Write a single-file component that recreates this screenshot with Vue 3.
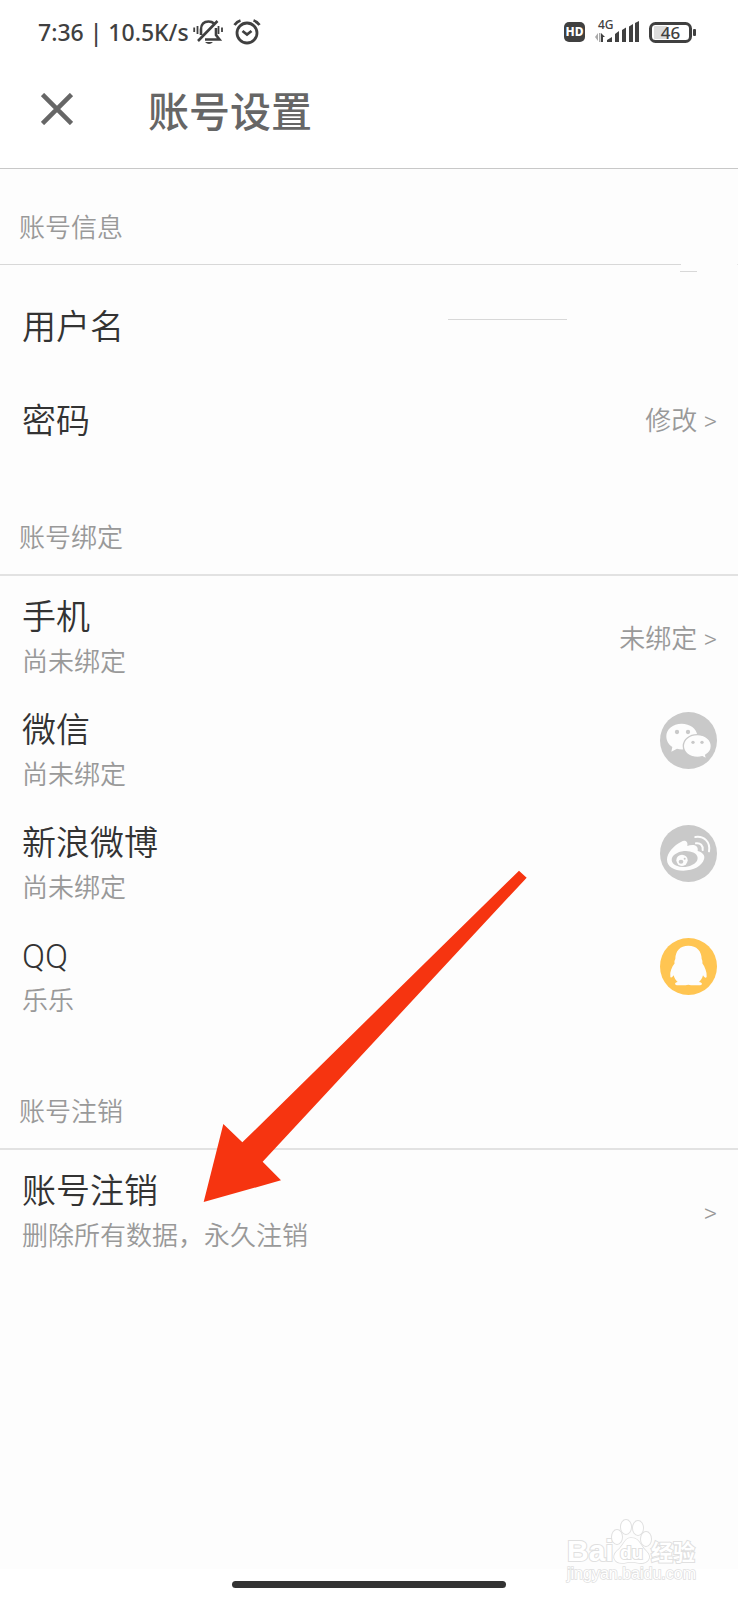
<script setup>
const bindings = [
  { id: 'phone', name: '手机', status: '尚未绑定', action: '未绑定' },
  { id: 'wechat', name: '微信', status: '尚未绑定' },
  { id: 'weibo', name: '新浪微博', status: '尚未绑定' },
  { id: 'qq', name: 'QQ', status: '乐乐' },
]
</script>

<template>
  <div class="page">
    <div class="status">
      <span class="status-text">7:36 | 10.5K/s</span>
      <svg class="bell" viewBox="0 0 30 28" width="30" height="28" fill="none" stroke="#404040" stroke-width="2.600">
        <path d="M8 17V11.500C8 6 11 3.500 15.500 3.500C18 3.500 19.500 4 21 5.500M23 10V17L26.500 21.500H12M5 23L24.500 3" />
        <path d="M1.200 9.500V14M4.500 8V16M25.500 8V16M29 9.500V14" stroke-width="1.800" />
        <path d="M12 24H20Q16 28 12 24Z" fill="#404040" stroke="none" />
      </svg>
      <svg class="alarm" viewBox="0 0 28 28" width="28" height="28" fill="none" stroke="#404040" stroke-width="2.800">
        <circle cx="14" cy="15" r="10" />
        <path d="M1.500 7Q4 3.500 7.500 2.500M20.500 2.500Q24 3.500 26.500 7" />
        <path d="M9.500 13L14 16.500L18.500 13" />
      </svg>
      <span class="spacer"></span>
      <span class="hd">HD</span>
      <svg class="signal" viewBox="0 0 46 32" width="46" height="32" fill="#404040">
        <text x="4" y="13" font-size="12">4G</text>
        <path d="M4 17V25L1 21Z" fill="#aaa" />
        <path d="M5 17H6.500V26H5Z" fill="#aaa" />
        <path d="M8 17L12 21H10V26H8ZM14 26V24L19 21V26ZM22 26V18L26 15V26ZM29 26V14L33 11.500V26ZM36 26V10.500L40 8V26ZM42 26V7L46 5V26Z" transform="translate(-1 0)" />
      </svg>
      <svg class="battery" viewBox="0 0 47 21" width="47" height="21">
        <rect x="1.500" y="1.500" width="40" height="18" rx="5" fill="#fff" stroke="#404040" stroke-width="3" />
        <path d="M6 4H18V17H6Q5 17 5 16V5Q5 4 6 4Z" fill="#ddd" />
        <rect x="44" y="7" width="3" height="7" rx="1" fill="#404040" />
        <text x="21.500" y="16.500" font-size="17" font-weight="500" text-anchor="middle" fill="#404040">46</text>
      </svg>
    </div>

    <header class="bar">
      <button class="close" aria-label="关闭">
        <svg viewBox="0 0 32 32" width="32" height="32" stroke="#666" stroke-width="4.600">
          <path d="M1.500 1.500L30.500 30.500M30.500 1.500L1.500 30.500" />
        </svg>
      </button>
      <h1>账号设置</h1>
    </header>

    <main>
      <section class="group info">
        <h2>账号信息</h2>
        <div class="broken-rule"><i></i><b></b></div>
        <div class="rows">
          <div class="row short"><span class="name">用户名</span></div>
          <div class="row short">
            <span class="name">密码</span>
            <button class="link">修改 &gt;</button>
          </div>
        </div>
        <i class="stray first"></i>
        <i class="stray second"></i>
      </section>

      <section class="group bind">
        <h2 class="ruled">账号绑定</h2>
        <div class="rows">
          <div v-for="b in bindings" :key="b.id" class="row">
            <div class="texts">
              <span class="name">{{ b.name }}</span>
              <span class="sub">{{ b.status }}</span>
            </div>
            <button v-if="b.action" class="link">{{ b.action }} &gt;</button>
            <button v-else class="social" :aria-label="b.name">
              <svg v-if="b.id === 'wechat'" viewBox="0 0 171 171" width="57" height="57">
                <circle cx="85.500" cy="85.500" r="85.500" fill="#c9c9c9" />
                <path d="M65 35C38 35 19 52 19 73C19 87 26 98 37 105L34 119L51 110Q60 113 72 112L112 70C110 50 90 35 65 35Z" fill="#fdfdfd" />
                <circle cx="51" cy="60" r="6.500" fill="#c9c9c9" /><circle cx="84" cy="60" r="6.500" fill="#c9c9c9" />
                <path d="M112 68C88 68 70 83 70 102C70 122 89 136 112 136Q120 136 127 134L140 141L137 129C148 123 154 113 154 102C154 83 136 68 112 68Z" fill="#fdfdfd" stroke="#c9c9c9" stroke-width="4" />
                <circle cx="99" cy="91" r="5" fill="#c9c9c9" /><circle cx="126" cy="91" r="5" fill="#c9c9c9" />
              </svg>
              <svg v-else-if="b.id === 'weibo'" viewBox="0 0 171 171" width="57" height="57">
                <circle cx="85.500" cy="85.500" r="85.500" fill="#c9c9c9" />
                <path d="M64 50C74 44 85 49 82 63C98 56 117 60 113 78C128 82 136 91 132 103C126 123 101 137 70 137C42 137 21 124 21 104C21 84 42 60 64 50Z" fill="#fdfdfd" />
                <ellipse cx="74" cy="102" rx="39" ry="24" fill="#c9c9c9" transform="rotate(-5 74 102)" />
                <ellipse cx="66" cy="106" rx="17" ry="17" fill="#fdfdfd" />
                <ellipse cx="63" cy="110" rx="7" ry="6" fill="#c9c9c9" /><circle cx="74" cy="101" r="3" fill="#c9c9c9" />
                <path d="M106 36C132 32 152 51 147 79M108 55C121 53 130 62 128 75" fill="none" stroke="#fdfdfd" stroke-width="6" stroke-linecap="round" />
              </svg>
              <svg v-else viewBox="0 0 171 171" width="57" height="57">
                <circle cx="85.500" cy="85.500" r="85.500" fill="#ffc552" />
                <path d="M85 23C60 23 46 39 46 63C44 67 42 71 44 76C35 88 29 102 31 116C33 122 38 116 41 112C43 120 47 127 53 132C42 134 43 142 55 142H77L85 140L93 142H116C129 142 129 134 117 132C123 127 127 120 129 112C133 118 138 122 140 116C141 102 135 88 127 76C128 71 127 67 125 63C125 39 110 23 85 23Z" fill="#fdfdfd" />
              </svg>
            </button>
          </div>
        </div>
      </section>

      <section class="group cancel">
        <h2 class="ruled">账号注销</h2>
        <div class="rows">
          <div class="row">
            <div class="texts">
              <span class="name">账号注销</span>
              <span class="sub">删除所有数据，永久注销</span>
            </div>
            <button class="link" aria-label="账号注销">&gt;</button>
          </div>
        </div>
        <svg class="arrow" viewBox="0 0 1140 1110" width="380" height="370">
          <path d="M1017 62L1040 83L248 935L303 991L71 1056L130 822L187 877Z" fill="#f63410" />
        </svg>
      </section>
    </main>

    <footer class="nav"><span></span></footer>

    <svg class="watermark" viewBox="0 0 140 70" width="140" height="70">
      <g fill="#fff" stroke="#e0e0e0" stroke-width="2" paint-order="stroke">
        <text x="3" y="46" font-size="30" font-weight="700" class="latin">Bai</text>
        <ellipse cx="53" cy="22" rx="5" ry="7" /><ellipse cx="62" cy="12" rx="5" ry="7" />
        <ellipse cx="74" cy="13" rx="5" ry="7" /><ellipse cx="82" cy="24" rx="5" ry="7" />
        <path d="M67 23C76 23 76 31 82 36C89 43 83 49 75 48Q67 46 60 48C51 49 47 42 53 36C60 31 60 23 67 23Z" stroke-width="1.500" />
        <text x="56" y="44" font-size="19" font-weight="700" class="latin">du</text>
        <text x="87" y="45" font-size="22" font-weight="700" class="cjk">经验</text>
        <text x="3" y="64" font-size="16" class="latin" stroke-width="1.500">jingyan.baidu.com</text>
      </g>
    </svg>
  </div>
</template>

<style>
body { margin: 0; background: #fdfdfd; }
</style>

<style scoped>
.page {
  position: relative;
  display: flex;
  flex-direction: column;
  min-height: 100vh;
  background: #fdfdfd;
  color: #333;
  font-family: Roboto, "Noto Sans CJK SC", sans-serif;
  font-weight: 350;
}
button { margin: 0; padding: 0; border: 0; background: none; font: inherit; color: inherit; cursor: pointer; }
svg { display: block; }
.status {
  display: flex;
  align-items: center;
  height: 64px;
  padding: 0 42px 0 38px;
  background: #fff;
  color: #404040;
  font-family: "Noto Sans", sans-serif;
}
.status-text { font-size: 23px; font-weight: 500; white-space: nowrap; }
.bell { margin-left: 4px; }
.alarm { margin-left: 10px; }
.spacer { flex: 1; }
.hd {
  width: 21px;
  border-radius: 5px;
  background: #404040;
  color: #fff;
  font-size: 12px;
  font-weight: 800;
  line-height: 20px;
  text-align: center;
}
.signal { margin-left: 9px; font-weight: 500; }
.battery { margin-left: 9px; }
.bar {
  display: flex;
  align-items: center;
  height: 105px;
  padding: 0 41px 14px;
  border-bottom: 1px solid #c8c8c8;
  background: #fff;
  box-sizing: border-box;
}
h1 { margin: 0 0 0 75px; padding-top: 8px; color: #666; font-size: 41px; font-weight: 500; line-height: 60px; }
main { flex: 1; }
.group { position: relative; }
h2 {
  height: 95px;
  margin: 0;
  padding: 39px 19px 0;
  box-sizing: border-box;
  color: #999;
  font-size: 26px;
  font-weight: inherit;
  line-height: 40px;
}
.ruled { height: 97px; border-bottom: 2px solid #e2e2e2; }
.broken-rule { display: flex; justify-content: space-between; height: 1px; }
.broken-rule i { flex: 1; margin-right: 56px; background: #d8d8d8; }
.broken-rule b { width: 1px; background: #e8e8e8; }
.rows { padding: 6px 21px 0 22px; }
.info { padding-bottom: 11px; }
.info .rows { padding-top: 15px; }
.bind { padding-bottom: 19px; }
.row { display: flex; align-items: center; justify-content: space-between; height: 113px; }
.short { height: 94px; }
.texts { display: flex; flex-direction: column; padding-bottom: 4px; }
.name { font-size: 34px; line-height: 50px; }
.sub { color: #999; font-size: 26px; line-height: 40px; }
.link { color: #999; font-size: 26px; line-height: 40px; }
.social { align-self: flex-start; margin-top: 17px; border-radius: 50%; }
.stray { position: absolute; height: 1px; background: #d8d8d8; }
.first { top: 102px; right: 41px; width: 17px; }
.second { top: 150px; right: 171px; width: 119px; }
.arrow { position: absolute; left: 180px; bottom: 49px; pointer-events: none; }
.nav { display: flex; justify-content: center; align-items: center; height: 31px; background: #fff; }
.nav span { width: 37%; height: 7px; border-radius: 4px; background: #333; }
.watermark { position: absolute; right: 34px; bottom: 15px; pointer-events: none; }
.latin { font-family: "Liberation Sans", sans-serif; }
.cjk { font-family: "Noto Sans CJK SC", sans-serif; }
</style>
